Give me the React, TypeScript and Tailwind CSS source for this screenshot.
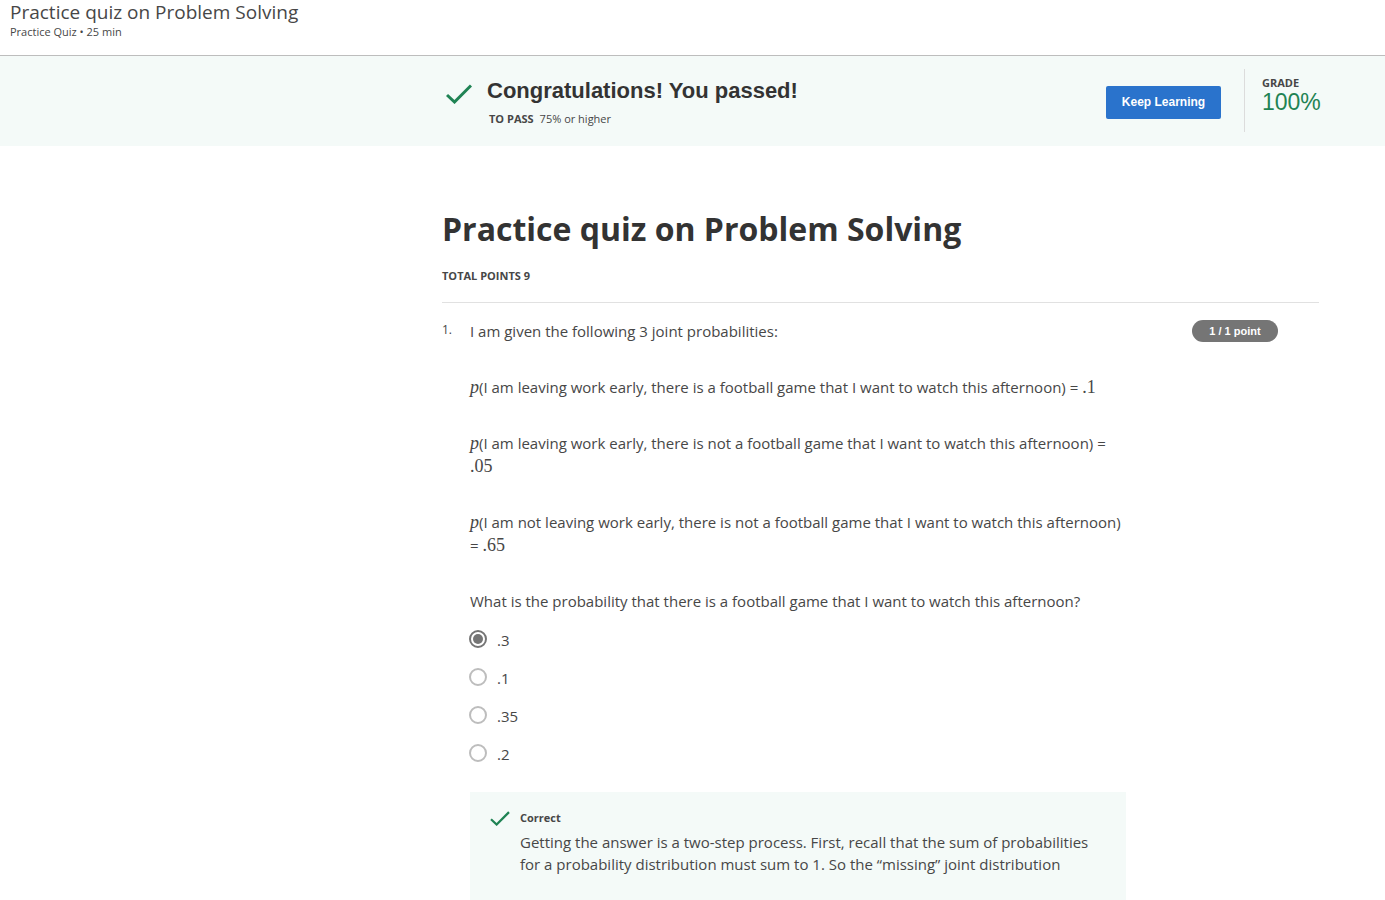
import type { ReactNode } from 'react';

const options = ['.3', '.1', '.35', '.2'];

function CheckIcon({ className }: { className: string }) {
  return (
    <svg viewBox="0 0 26 20" className={className} aria-hidden="true">
      <path d="M1 11 L8.5 18 L25 1.5" fill="none" stroke="#1f8354" strokeWidth="3" />
    </svg>
  );
}

function MathVar({ children }: { children: ReactNode }) {
  return <i className="font-['Liberation_Serif',serif] text-[18px] leading-none">{children}</i>;
}

function MathNum({ children }: { children: ReactNode }) {
  return <span className="font-['Liberation_Serif',serif] text-[18px] leading-none">{children}</span>;
}

export default function App() {
  return (
    <div className="h-screen overflow-hidden bg-white font-['Open_Sans',sans-serif] text-[#474747]">
      <header className="h-14 border-b border-[#bdbdbd] pl-2.5">
        <div className="text-[19px] leading-6">Practice quiz on Problem Solving</div>
        <div className="text-[11px] leading-4">Practice Quiz • 25 min</div>
      </header>

      <section className="flex h-[90px] items-start bg-[#f4faf8] pl-[446px] pr-[66px]">
        <CheckIcon className="mt-7 h-5 w-[26px] shrink-0" />
        <div className="ml-[15px] mt-5 flex-1">
          <h2 className="font-['Liberation_Sans',sans-serif] text-[22px] font-bold leading-[30px] text-[#333]">
            Congratulations! You passed!
          </h2>
          <p className="ml-0.5 mt-1 flex gap-1.5 text-[11px] leading-[18px]">
            <b>TO PASS</b>
            <span>75% or higher</span>
          </p>
        </div>
        <button
          type="button"
          className="mt-[30px] h-[33px] w-[115px] rounded-xs bg-[#2a73cc] pb-0.5 font-['Liberation_Sans',sans-serif] text-[12px] font-bold text-white"
        >
          Keep Learning
        </button>
        <div className="ml-[23px] mt-[13px] h-[63px] w-[75px] border-l border-[#dcdcdc] pl-[17px] pt-2">
          <div className="text-[11px] font-bold leading-3">GRADE</div>
          <div className="font-['Liberation_Sans',sans-serif] text-[23px] leading-[26px] text-[#1f8354]">100%</div>
        </div>
      </section>

      <main className="pl-[442px] pr-[66px] pt-[60px]">
        <h1 className="text-[32px] font-bold leading-[46px] text-[#333]">Practice quiz on Problem Solving</h1>
        <p className="mt-3.5 text-[11px] font-bold leading-5">TOTAL POINTS 9</p>
        <hr className="mt-4 border-[#e1e1e1]" />

        <section className="flex items-start pt-[17px]">
          <div className="w-7 shrink-0 text-[12px] leading-5">1.</div>
          <div className="w-[656px] shrink-0">
            <div className="flex flex-col gap-[33px] text-[15px] leading-[23px]">
              <p>I am given the following 3 joint probabilities:</p>
              <p>
                <MathVar>p</MathVar>(I am leaving work early, there is a football game that I want to watch this
                afternoon) = <MathNum>.1</MathNum>
              </p>
              <p>
                <MathVar>p</MathVar>(I am leaving work early, there is not a football game that I want to watch this
                afternoon) = <br />
                <MathNum>.05</MathNum>
              </p>
              <p>
                <MathVar>p</MathVar>(I am not leaving work early, there is not a football game that I want to watch this
                afternoon) <br />= <MathNum>.65</MathNum>
              </p>
              <p>What is the probability that there is a football game that I want to watch this afternoon?</p>
            </div>
            <div role="radiogroup" aria-label="Answer" className="mt-[15px] flex flex-col gap-[14px]">
              {options.map((o, i) => (
                <label key={o} className="flex h-6 items-center gap-2.5 text-[15px] leading-6">
                  <input
                    type="radio"
                    name="answer"
                    defaultChecked={i === 0}
                    className="-ml-px mb-0.5 size-[18px] appearance-none rounded-full border-2 border-[#bdbdbd] bg-white p-0.5 checked:border-[#757575] checked:bg-[#757575] checked:bg-clip-content"
                  />
                  {o}
                </label>
              ))}
            </div>
            <div className="mt-[26px] flex h-[150px] items-start bg-[#f4faf8] pl-5 pr-8 pt-[17px]">
              <CheckIcon className="mt-0.5 h-[15px] w-5 shrink-0" />
              <div className="ml-2.5">
                <div className="text-[11px] font-bold leading-[18px]">Correct</div>
                <p className="mt-1 text-[15px] leading-[22px]">
                  Getting the answer is a two-step process. First, recall that the sum of probabilities for a
                  probability distribution must sum to 1. So the “missing” joint distribution
                </p>
              </div>
            </div>
          </div>
          <div className="ml-auto mr-[41px] flex h-[22px] w-[86px] items-center justify-center rounded-full bg-[#757575] font-['Liberation_Sans',sans-serif] text-[11px] font-bold text-white">
            1 / 1 point
          </div>
        </section>
      </main>
    </div>
  );
}
